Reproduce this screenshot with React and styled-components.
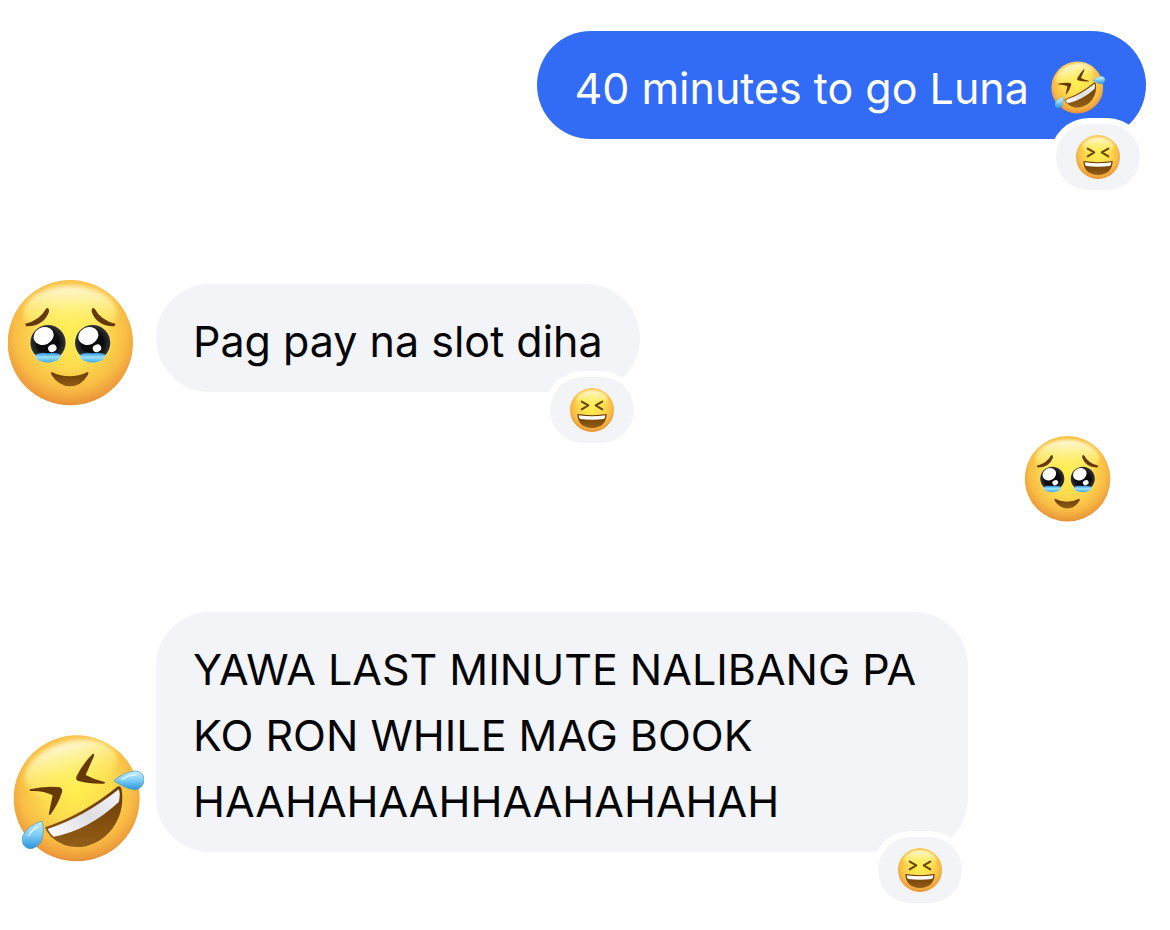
import React, { useId } from "react";
import styled, { createGlobalStyle } from "styled-components";

const messages = [
  {
    id: 1,
    mine: true,
    text: "40 minutes to go Luna",
    emoji: "rofl",
    reaction: "Laughing",
    space: 0,
  },
  {
    id: 2,
    text: "Pag pay na slot diha",
    avatar: "holding",
    reaction: "Laughing",
    space: 141,
  },
  { id: 3, mine: true, sticker: true, space: 30 },
  {
    id: 4,
    text: "YAWA LAST MINUTE NALIBANG PA KO RON WHILE MAG BOOK HAAHAHAAHHAAHAHAHAH",
    avatar: "rofl",
    reaction: "Laughing",
    space: 90,
  },
];

const FaceFill = ({ id }) => (
  <>
    <radialGradient id={`${id}-face`} cx="0.5" cy="0.42" r="0.6">
      <stop offset="0" stopColor="#fff04f" />
      <stop offset="0.45" stopColor="#fddb4e" />
      <stop offset="0.75" stopColor="#f8bc45" />
      <stop offset="0.92" stopColor="#ee9b3a" />
      <stop offset="1" stopColor="#dd8633" />
    </radialGradient>
    <linearGradient id={`${id}-shine`} x1="0" y1="0" x2="0" y2="1">
      <stop offset="0" stopColor="#fffbe4" stopOpacity="0.95" />
      <stop offset="0.5" stopColor="#fff88a" stopOpacity="0.6" />
      <stop offset="1" stopColor="#fff04f" stopOpacity="0" />
    </linearGradient>
    <filter
      id={`${id}-soft`}
      x="-0.2"
      y="-0.2"
      width="1.4"
      height="1.4"
      primitiveUnits="objectBoundingBox"
    >
      <feGaussianBlur stdDeviation="0.025 0.045" />
    </filter>
    <linearGradient id={`${id}-brown`} x1="0" y1="0" x2="0" y2="1">
      <stop offset="0" stopColor="#693900" />
      <stop offset="1" stopColor="#925e18" />
    </linearGradient>
    <linearGradient id={`${id}-drop`} x1="0" y1="0" x2="0" y2="1">
      <stop offset="0" stopColor="#c9f0ff" />
      <stop offset="0.5" stopColor="#7dccf5" />
      <stop offset="1" stopColor="#2a96df" />
    </linearGradient>
  </>
);

const HoldingTears = () => {
  const id = useId();
  return (
    <svg viewBox="24 30 378 378" role="img" aria-label="Holding back tears">
      <defs>
        <FaceFill id={id} />
        <linearGradient id={`${id}-tear`} x1="0" y1="0" x2="0" y2="1">
          <stop offset="0" stopColor="#2789d8" />
          <stop offset="0.45" stopColor="#9be3ff" />
          <stop offset="1" stopColor="#3aa7ee" />
        </linearGradient>
        <radialGradient id={`${id}-eye`} cx="0.5" cy="0.5" r="0.5">
          <stop offset="0.6" stopColor="#0b0b0d" />
          <stop offset="1" stopColor="#35363a" />
        </radialGradient>
      </defs>
      <circle cx="211" cy="218" r="188" fill={`url(#${id}-face)`} />
      <ellipse
        cx="211"
        cy="128"
        rx="140"
        ry="80"
        fill={`url(#${id}-shine)`}
        filter={`url(#${id}-soft)`}
      />
      <path
        d="M76 161Q119 151 138 116Q147 109 147 125Q132 167 83 169Q75 168 76 161Z"
        fill="#66390a"
      />
      <path
        d="M346 161Q303 151 284 116Q275 109 275 125Q290 167 339 169Q347 168 346 161Z"
        fill="#66390a"
      />
      {[0, 134].map((x) => (
        <g key={x} transform={`translate(${x} 0)`}>
          <circle cx="144" cy="220" r="56" fill="#fff27b" opacity="0.5" />
          <circle cx="144" cy="218" r="53" fill={`url(#${id}-eye)`} />
          <path
            d="M106 254Q123 245 144 250Q166 245 182 254Q181 270 164 274Q144 281 123 274Q106 270 106 254Z"
            fill={`url(#${id}-tear)`}
          />
          <ellipse
            cx="131"
            cy="198"
            rx="31"
            ry="26"
            fill="#fff"
            transform="rotate(-28 131 198)"
          />
          <ellipse
            cx="157"
            cy="235"
            rx="13"
            ry="11"
            fill="#fff"
            transform="rotate(-28 157 235)"
          />
        </g>
      ))}
      <path
        d="M155 306Q209 332 263 306Q268 307 262 317Q244 348 209 349Q176 347 156 317Q151 308 155 306Z"
        fill={`url(#${id}-brown)`}
      />
    </svg>
  );
};

const Rofl = () => {
  const id = useId();
  return (
    <svg viewBox="24 27 408 396" role="img" aria-label="Rolling laughing">
      <defs>
        <FaceFill id={id} />
        <linearGradient id={`${id}-teeth`} x1="0" y1="1" x2="1" y2="0">
          <stop offset="0" stopColor="#ffffff" />
          <stop offset="0.5" stopColor="#dedee3" />
          <stop offset="1" stopColor="#f7f7f9" />
        </linearGradient>
      </defs>
      <circle cx="230" cy="220" r="189" fill={`url(#${id}-face)`} />
      <ellipse
        cx="213"
        cy="132"
        rx="142"
        ry="82"
        fill={`url(#${id}-shine)`}
        filter={`url(#${id}-soft)`}
        transform="rotate(-16 213 132)"
      />
      <path
        d="M278 87Q283 85 282 93L257 150Q284 165 314 171Q318 175 311 176Q266 177 233 167Q226 164 230 153Q250 114 278 87Z"
        fill="#653900"
      />
      <path
        d="M90 193Q136 182 179 187Q189 190 186 202Q173 241 151 269Q145 272 147 263L158 211Q129 196 91 198Q86 195 90 193Z"
        fill="#653900"
      />
      <path
        d="M135 307Q248 270 354 184Q362 181 365 193Q375 259 337 311Q301 357 244 366Q189 369 154 336Q140 322 135 307Z"
        fill={`url(#${id}-brown)`}
      />
      <path
        d="M143 312Q253 276 356 193Q362 203 357 230Q266 315 161 335Q149 326 143 312Z"
        fill={`url(#${id}-teeth)`}
      />
      <path
        d="M342 167Q369 142 406 138Q430 140 433 163Q430 189 407 194Q376 192 342 167Z"
        fill={`url(#${id}-drop)`}
        stroke="#4295bd"
        strokeWidth="2"
      />
      <path
        d="M126 288Q136 322 122 352Q105 375 83 370Q62 360 68 333Q82 302 126 288Z"
        fill={`url(#${id}-drop)`}
        stroke="#4295bd"
        strokeWidth="2"
      />
      <path
        d="M366 163Q388 149 408 150"
        fill="none"
        stroke="#eefbff"
        strokeWidth="5"
        strokeLinecap="round"
        opacity="0.8"
      />
      <path
        d="M113 306Q96 314 86 332"
        fill="none"
        stroke="#eefbff"
        strokeWidth="5"
        strokeLinecap="round"
        opacity="0.8"
      />
    </svg>
  );
};

const Laughing = () => {
  const id = useId();
  return (
    <svg viewBox="198 345 132 132" aria-hidden="true">
      <defs>
        <FaceFill id={id} />
      </defs>
      <circle cx="264" cy="411" r="66" fill={`url(#${id}-face)`} />
      <ellipse
        cx="264"
        cy="380"
        rx="48"
        ry="28"
        fill={`url(#${id}-shine)`}
        filter={`url(#${id}-soft)`}
      />
      <path
        d="M233 386L253 397L233 409M295 386L275 397L295 409"
        fill="none"
        stroke="#6b4300"
        strokeWidth="6"
        strokeLinecap="round"
        strokeLinejoin="round"
      />
      <path
        d="M220 423Q264 430 308 423Q307 463 264 465Q221 463 220 423Z"
        fill={`url(#${id}-brown)`}
      />
      <path
        d="M224 427Q264 433 304 427Q304 435 299 438Q264 443 229 438Q224 435 224 427Z"
        fill="#fff"
      />
    </svg>
  );
};

export default function App() {
  return (
    <>
      <GlobalStyle />
      <Thread>
        {messages.map((message) => (
          <Row key={message.id} $mine={message.mine} $space={message.space}>
            {message.avatar && (
              <Avatar $wide={message.avatar === "rofl"}>
                {message.avatar === "rofl" ? <Rofl /> : <HoldingTears />}
              </Avatar>
            )}
            {message.sticker ? (
              <Sticker>
                <HoldingTears />
              </Sticker>
            ) : (
              <Bubble $mine={message.mine}>
                <p>
                  {message.text}
                  {message.emoji && (
                    <>
                      {" "}
                      <Emoji>
                        <Rofl />
                      </Emoji>
                    </>
                  )}
                </p>
                <Reaction type="button" aria-label={message.reaction}>
                  <Laughing />
                </Reaction>
              </Bubble>
            )}
          </Row>
        ))}
      </Thread>
    </>
  );
}

const GlobalStyle = createGlobalStyle`
  * {
    box-sizing: border-box;
  }

  body {
    margin: 0;
    background: #fff;
    font-family: Inter, "Liberation Sans", sans-serif;
  }

  svg {
    display: block;
    width: 100%;
    height: auto;
  }
`;

const Thread = styled.main`
  display: flex;
  flex-direction: column;
  padding: 31px 24px 64px 8px;
`;

const Row = styled.div`
  display: flex;
  align-items: flex-end;
  justify-content: ${({ $mine }) => ($mine ? "flex-end" : "flex-start")};
  margin-top: ${({ $space }) => $space}px;
`;

const Avatar = styled.div`
  flex: none;
  width: 148px;

  svg {
    width: ${({ $wide }) => ($wide ? 136 : 126)}px;
  }
`;

const Sticker = styled.div`
  width: 86px;
  margin-right: 35px;
`;

const Bubble = styled.div`
  position: relative;
  max-width: 812px;
  margin-bottom: ${({ $mine }) => ($mine ? 0 : 14)}px;
  padding: 24px 37px 18px;
  border-radius: 54px;
  background: ${({ $mine }) => ($mine ? "#316bf6" : "#f2f4f8")};
  color: ${({ $mine }) => ($mine ? "#fff" : "#050505")};

  p {
    margin: 0;
    font-size: 43px;
    line-height: 66px;
  }
`;

const Emoji = styled.span`
  display: inline-block;
  width: 56px;
  margin: 0 4px 0 8px;
  vertical-align: -11px;
  line-height: 0;
`;

const Reaction = styled.button`
  position: absolute;
  right: 6px;
  bottom: -51px;
  display: flex;
  align-items: center;
  justify-content: center;
  width: 84px;
  height: 66px;
  padding: 0;
  border: 0;
  border-radius: 33px;
  background: #f2f4f8;
  box-shadow: 0 0 0 6px #fff;
  cursor: pointer;

  svg {
    width: 44px;
  }
`;
